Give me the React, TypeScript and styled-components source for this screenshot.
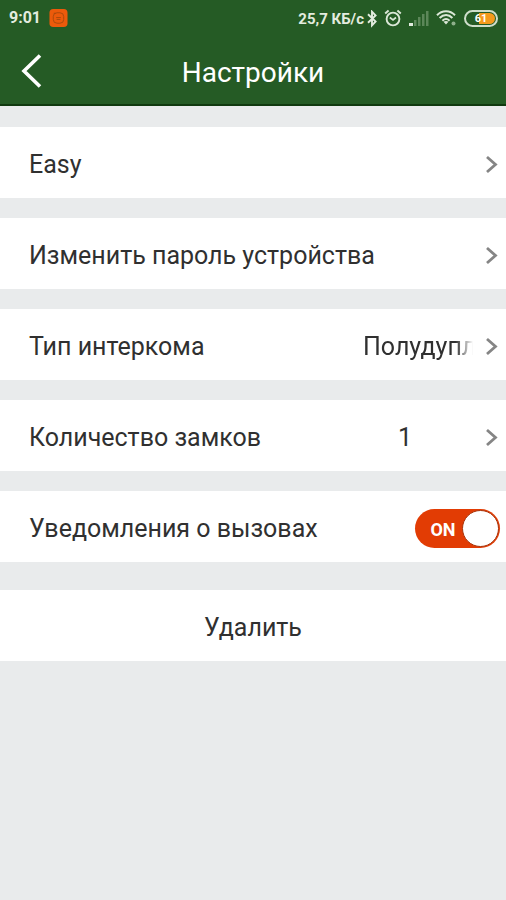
import React from "react";
import styled, { createGlobalStyle } from "styled-components";

const GlobalStyle = createGlobalStyle`
  *, *::before, *::after { box-sizing: border-box; }
  html, body { margin: 0; background: #e9ebec; }
  body { font-family: Roboto, "Noto Sans", sans-serif; color: #303030; }
  button, select, input { font: inherit; color: inherit; margin: 0; }
`;

const Page = styled.div`
  min-height: 100vh;
  background: #e9ebec;
`;

const Header = styled.header`
  background: #255b25;
  color: #fff;
  border-bottom: 2px solid #10390f;
`;

const StatusBar = styled.div`
  display: flex;
  align-items: center;
  height: 36px;
  padding: 0 8px 0 9px;
  color: #e3ecdf;
`;

const Clock = styled.time`
  font-size: 16px;
  font-weight: 700;
  line-height: 20px;
  margin-right: 8px;
`;

const StatusGroup = styled.div`
  display: flex;
  align-items: center;
  gap: 7px;
  margin-left: auto;
`;

const Speed = styled.span`
  display: flex;
  align-items: center;
  gap: 3px;
  font-size: 15px;
  font-weight: 700;
  line-height: 20px;
  padding-top: 2px;
  white-space: nowrap;
`;

const Icon = styled.svg`
  display: block;
  flex: none;
`;

const TitleBar = styled.div`
  display: grid;
  grid-template-columns: 64px 1fr 64px;
  align-items: center;
  height: 68px;
  padding-top: 2px;
`;

const BackButton = styled.button`
  display: flex;
  align-items: center;
  height: 64px;
  padding: 0 0 0 20px;
  border: 0;
  background: none;
  cursor: pointer;
`;

const Title = styled.h1`
  margin: 0;
  padding-top: 4px;
  font-size: 28px;
  font-weight: 400;
  line-height: 36px;
  text-align: center;
`;

const List = styled.main`
  display: flex;
  flex-direction: column;
  gap: 20px;
  padding: 21px 0;
`;

const Row = styled.div`
  display: flex;
  align-items: center;
  width: 100%;
  height: 71px;
  padding: 4px 8px 0 29px;
  background: #fff;
  font-size: 25px;
  line-height: 32px;
  text-align: left;
`;

const RowButton = styled(Row).attrs({ as: "button", type: "button" })`
  border: 0;
  cursor: pointer;
`;

const DeleteButton = styled(RowButton)`
  justify-content: center;
  padding: 4px 0 0;
  margin-top: 8px;
`;

const Label = styled.span`
  flex: 1;
  white-space: nowrap;
`;

const Value = styled.span<{ $fade?: boolean }>`
  width: 110px;
  margin-right: 11px;
  white-space: nowrap;
  padding-left: ${(p) => (p.$fade ? "0" : "35px")};
  mask-image: ${(p) =>
    p.$fade ? "linear-gradient(to right, #000 84%, transparent)" : "none"};
`;

const Switch = styled.label`
  display: flex;
  flex: 1;
  align-items: center;
  justify-content: space-between;
  cursor: pointer;
`;

const SwitchInput = styled.input`
  appearance: none;
  display: grid;
  grid-template-columns: 1fr 37px;
  align-items: center;
  width: 85px;
  height: 39px;
  margin: 0 -2px 0 0;
  padding: 1px;
  border-radius: 20px;
  background: #b9bcbd;
  cursor: pointer;

  &::before {
    content: "OFF";
    color: #fff;
    font-size: 18px;
    font-weight: 700;
    line-height: 20px;
    padding: 2px 0 0 8px;
    text-align: center;
  }
  &::after {
    content: "";
    width: 37px;
    height: 37px;
    border-radius: 50%;
    background: #fff;
    border: 1px solid #b9bcbd;
  }
  &:checked { background: #e23c04; }
  &:checked::before { content: "ON"; }
  &:checked::after { border-color: #a83208; }
`;

const Chevron = () => (
  <Icon width="14" height="20" viewBox="0 0 14 20" fill="none" aria-hidden="true">
    <path d="M3 2 11.500 9.500 3 17" stroke="#858585" strokeWidth="2.800" />
  </Icon>
);

const AppBadge = () => (
  <Icon width="19" height="20" viewBox="0 0 20 20" fill="none" aria-hidden="true">
    <rect x="0.5" y="0.5" width="19" height="19" rx="4" fill="#ec5a0b" />
    <rect x="4.5" y="4.5" width="11" height="11" rx="4" stroke="#a94a0c" />
    <path d="M7.5 9.5h5M8 11.5h4M5 5h2" stroke="#a94a0c" />
  </Icon>
);

const Bluetooth = () => (
  <Icon width="10" height="18" viewBox="0 0 10 18" fill="none" aria-hidden="true">
    <path d="M1 4.200 8.600 11.500 5 15.300V1.700L8.600 5.500 1 12.800" stroke="#e3ecdf" strokeWidth="1.900" />
  </Icon>
);

const Alarm = () => (
  <Icon width="18" height="18" viewBox="0 0 18 18" fill="none" stroke="#dbe7d7" aria-hidden="true">
    <circle cx="9" cy="10" r="6.4" strokeWidth="1.900" />
    <path d="M5.8 8.5 9 11l3-2.5" strokeWidth="1.700" />
    <path d="M1.2 4.4 4.6 1.6M16.8 4.4l-3.4-2.8" strokeWidth="2" />
  </Icon>
);

const Signal = () => (
  <Icon width="20" height="18" viewBox="0 0 20 18" aria-hidden="true">
    <path d="M0 17v-3h4v3z" fill="#e3ecdf" />
    <path d="M5 17v-6h2.500v6zM9 17V8h2.500v9zM13 17V5h2.500v12zM17 17V2h2.500v15z" fill="#5c8759" />
  </Icon>
);

const Wifi = () => (
  <Icon width="21" height="18" viewBox="0 0 21 18" fill="none" stroke="#dbe7d7" aria-hidden="true">
    <path d="M1 6.300C6 1 14 1 19 6.300M3.600 9c4-4 9-4 12.800 0M6.400 11.700c2.400-2.200 4.800-2.200 7.200 0" strokeWidth="2" />
    <path d="M7.500 12.800 10 15.500l2.500-2.700c-1.500-1.200-3.500-1.200-5 0z" fill="#dbe7d7" stroke="none" />
    <circle cx="17.500" cy="14.500" r="2" fill="#8fb08b" stroke="none" />
  </Icon>
);

const Battery = styled.span`
  display: flex;
  align-items: center;
  justify-content: center;
  width: 34px;
  height: 17px;
  border: 2px solid #cfdecb;
  border-radius: 9px;
  background: linear-gradient(to right, #255b25 42%, #f49a1c 42%) content-box;
  padding: 1px;
  color: #fff;
  font-size: 11px;
  font-weight: 700;
  line-height: 11px;
`;

export default function App() {
  return (
    <Page>
      <GlobalStyle />
      <Header>
        <StatusBar>
          <Clock>9:01</Clock>
          <AppBadge />
          <StatusGroup>
            <Speed>
              25,7 КБ/с
              <Bluetooth />
            </Speed>
            <Alarm />
            <Signal />
            <Wifi />
            <Battery>61</Battery>
          </StatusGroup>
        </StatusBar>
        <TitleBar>
          <BackButton type="button" aria-label="Назад">
            <Icon width="22" height="34" viewBox="0 0 22 34" fill="none" aria-hidden="true">
              <path d="M20 1.500 4 17l16 15.500" stroke="#fff" strokeWidth="3.600" />
            </Icon>
          </BackButton>
          <Title>Настройки</Title>
        </TitleBar>
      </Header>
      <List>
        <RowButton>
          <Label>Easy</Label>
          <Chevron />
        </RowButton>
        <RowButton>
          <Label>Изменить пароль устройства</Label>
          <Chevron />
        </RowButton>
        <RowButton>
          <Label>Тип интеркома</Label>
          <Value $fade>Полудупл</Value>
          <Chevron />
        </RowButton>
        <RowButton>
          <Label>Количество замков</Label>
          <Value>1</Value>
          <Chevron />
        </RowButton>
        <Row>
          <Switch>
            Уведомления о вызовах
            <SwitchInput type="checkbox" role="switch" defaultChecked />
          </Switch>
        </Row>
        <DeleteButton>Удалить</DeleteButton>
      </List>
    </Page>
  );
}
